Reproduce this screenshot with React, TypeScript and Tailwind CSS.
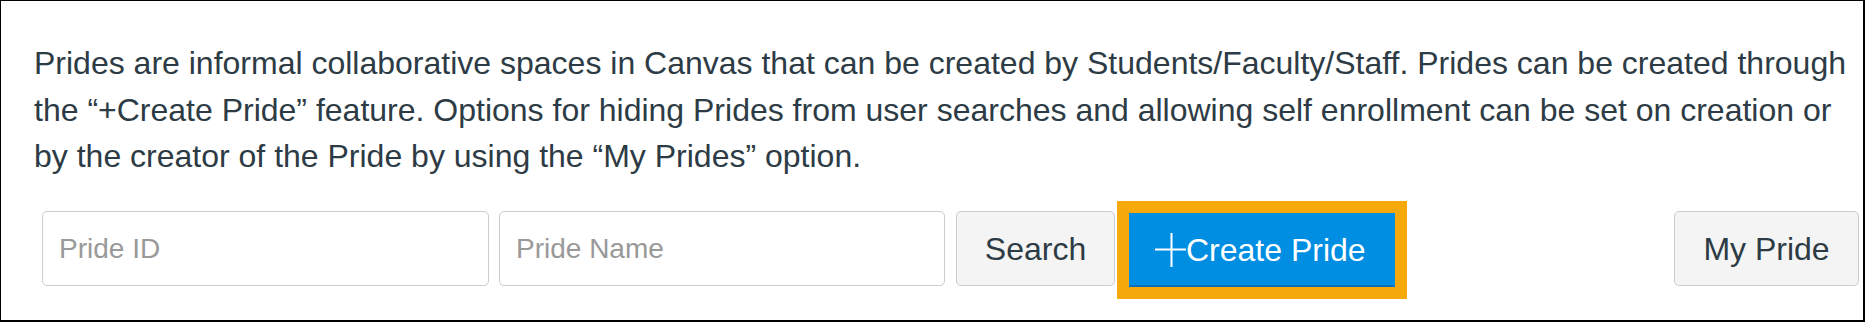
import React from 'react'

function PlusIcon() {
  return (
    <svg width="31" height="34" viewBox="0 0 31 34" className="shrink-0" aria-hidden="true">
      <line x1="0" y1="16.5" x2="31" y2="16.5" stroke="white" strokeWidth="2" />
      <line x1="16.5" y1="0" x2="16.5" y2="34" stroke="white" strokeWidth="2" />
    </svg>
  )
}

export default function App() {
  return (
    <div className="w-[1865px] h-[322px] bg-white border-l border-t border-r-2 border-b-2 border-black font-['Liberation_Sans',Arial,sans-serif]">
      <p className="pl-[33px] pr-[9px] pt-[39px] text-[32px] leading-[46.7px] text-[#2d3b45]">
        Prides are informal collaborative spaces in Canvas that can be created by Students/Faculty/Staff. Prides can be created through the “+Create Pride” feature. Options for hiding Prides from user searches and allowing self enrollment can be set on creation or by the creator of the Pride by using the “My Prides” option.
      </p>

      <div className="mt-[21px] ml-[41px] mr-[4px] flex items-start">
        <input
          type="text"
          placeholder="Pride ID"
          className="mt-[10px] w-[447px] h-[75px] rounded-[5px] border border-[#cccccc] bg-white px-[16px] text-[28px] text-[#2d3b45] placeholder:text-[#999999] outline-none"
        />
        <input
          type="text"
          placeholder="Pride Name"
          className="mt-[10px] ml-[10px] w-[446px] h-[75px] rounded-[5px] border border-[#cccccc] bg-white px-[16px] text-[28px] text-[#2d3b45] placeholder:text-[#999999] outline-none"
        />
        <button
          type="button"
          className="mt-[10px] ml-[11px] w-[159px] h-[75px] flex items-center justify-center rounded-[5px] border border-[#c7cdd1] bg-[#f4f4f4] text-[32px] text-[#2d3b45]"
        >
          Search
        </button>
        <div className="ml-[2px] p-[12px] bg-[#f6a90a]">
          <button
            type="button"
            className="w-[266px] h-[74px] flex items-center pl-[25px] border border-[#008ee2] border-b-2 border-b-[#0670b8] bg-[#008ee2] text-[32px] text-white"
          >
            <PlusIcon />
            <span>Create Pride</span>
          </button>
        </div>
        <button
          type="button"
          className="mt-[10px] ml-auto w-[185px] h-[75px] flex items-center justify-center rounded-[5px] border border-[#c7cdd1] bg-[#f4f4f4] text-[32px] text-[#2d3b45]"
        >
          My Pride
        </button>
      </div>
    </div>
  )
}
